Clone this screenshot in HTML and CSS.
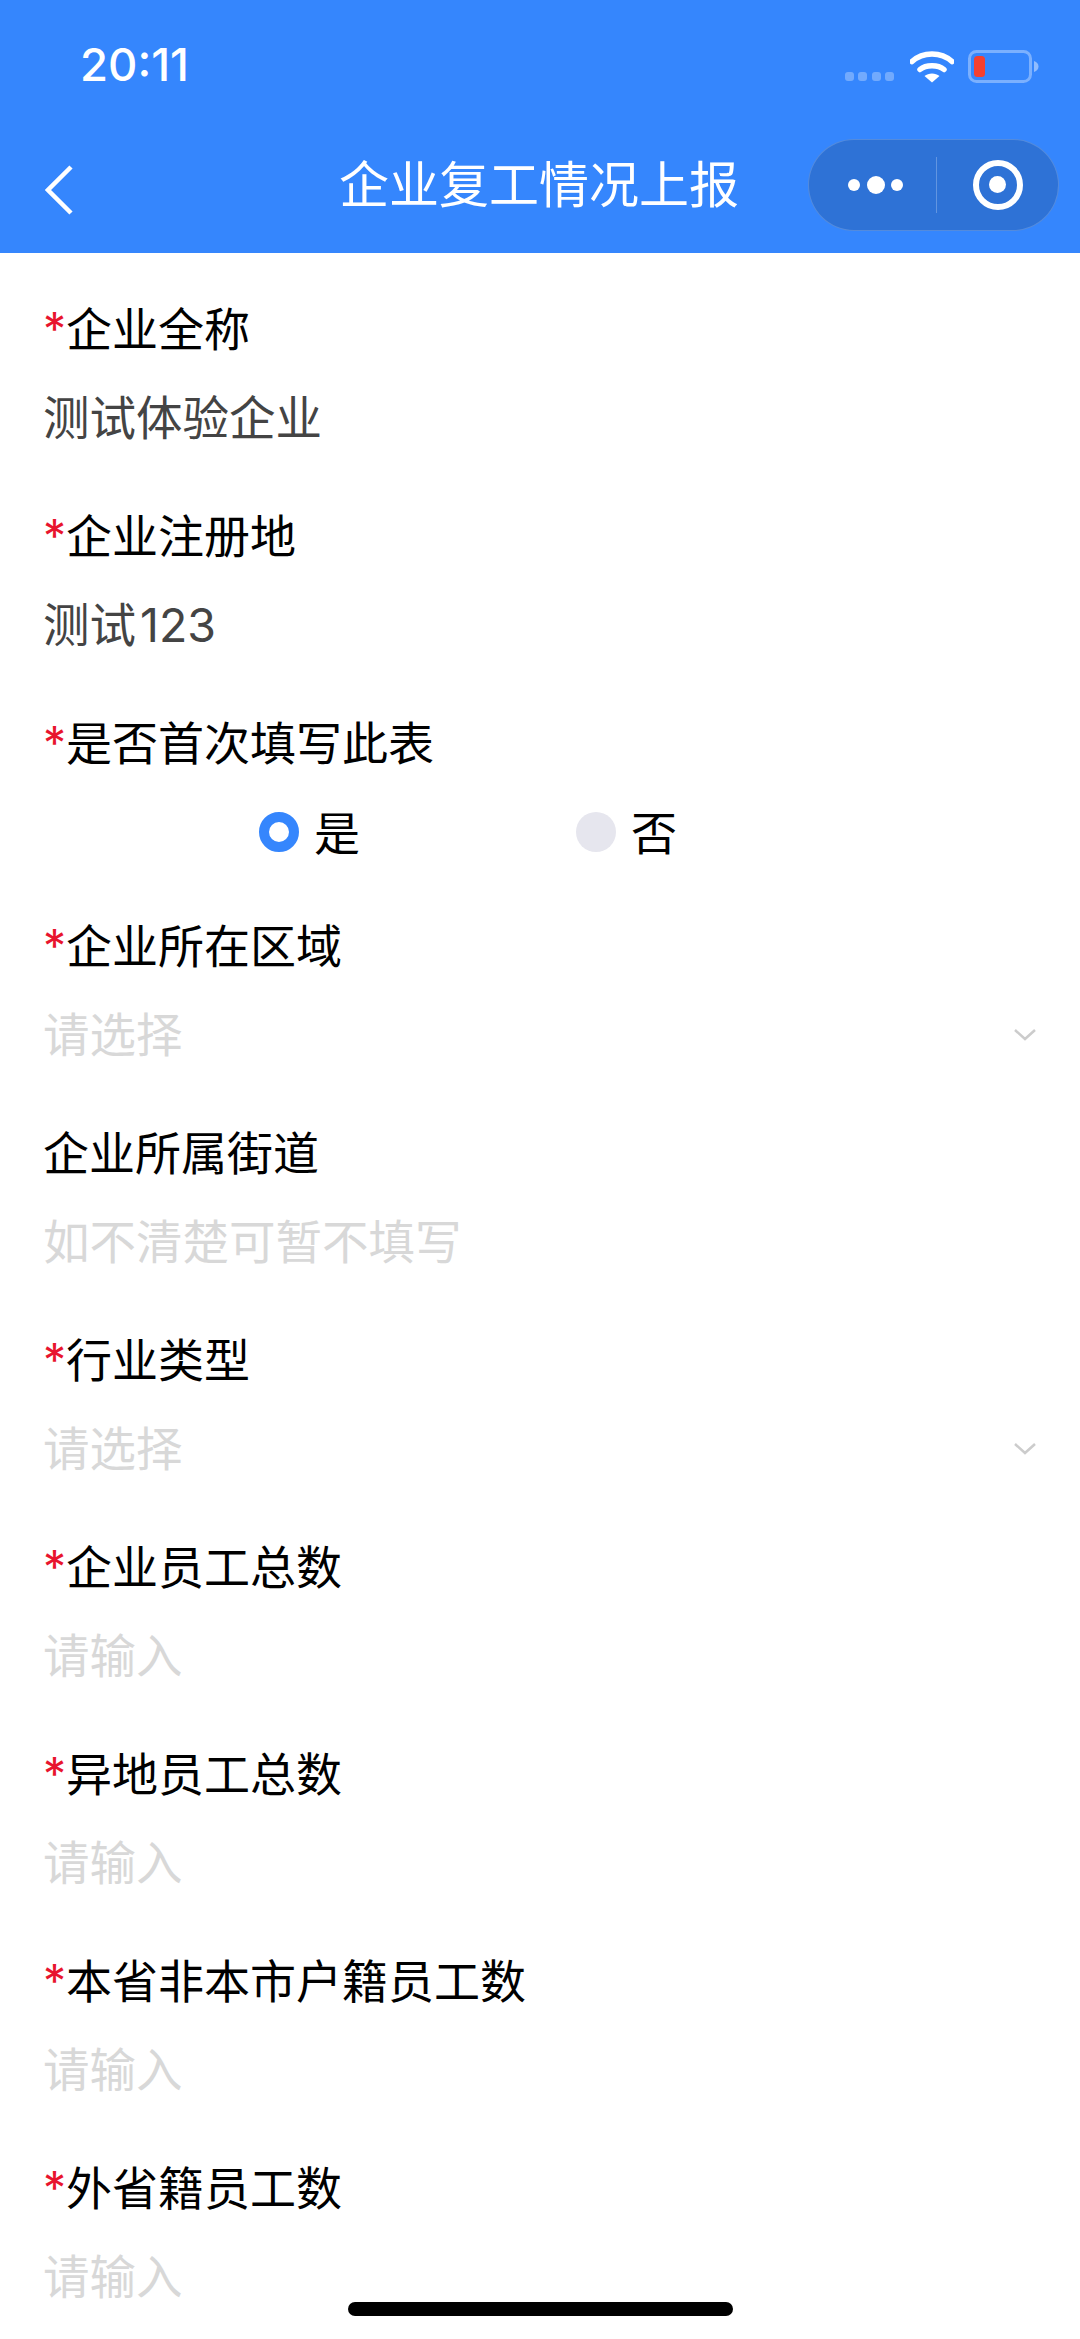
FILE: index.html
```html
<!DOCTYPE html>
<html lang="zh-CN">
<head>
    <meta charset="UTF-8">
    <meta name="viewport" content="width=device-width, initial-scale=1.0">
    <title>企业复工情况上报</title>
    <link rel="stylesheet" href="styles.css">
</head>
<body>
    <header class="top-bar">
        <!-- Status bar -->
        <div class="status-bar">
            <span class="time">20:11</span>
            <div class="status-icons">
                <div class="signal"><i></i><i></i><i></i><i></i></div>
                <svg class="wifi" width="44" height="33" viewBox="0 0 44 33">
                    <path d="M2 11.5C13 1.5 31 1.5 42 11.5" fill="none" stroke="#fff" stroke-width="5.5" stroke-linecap="round"/>
                    <path d="M10 19.5C16 14.5 28 14.5 34 19.5" fill="none" stroke="#fff" stroke-width="5.5" stroke-linecap="round"/>
                    <path d="M22 32.5L14.5 26C18.5 22.5 25.5 22.5 29.5 26Z" fill="#fff"/>
                </svg>
                <svg class="battery" width="71" height="33" viewBox="0 0 71 33">
                    <rect x="1.5" y="1.5" width="61" height="30" rx="7" fill="none" stroke="#fff" stroke-opacity="0.35" stroke-width="3"/>
                    <rect x="6" y="6" width="11" height="21" rx="3.5" fill="#f5402f"/>
                    <path d="M66 11C69 12 70.5 14 70.5 16.5C70.5 19 69 21 66 22Z" fill="#fff" fill-opacity="0.45"/>
                </svg>
            </div>
        </div>
        <!-- Nav bar -->
        <nav class="nav-bar">
            <svg class="back" width="30" height="52" viewBox="0 0 30 52">
                <path d="M26 3L3 26L26 49" fill="none" stroke="#fff" stroke-width="4.5"/>
            </svg>
            <h1 class="title">企业复工情况上报</h1>
            <div class="capsule">
                <div class="capsule-btn more"><i></i><i class="big"></i><i></i></div>
                <div class="capsule-btn">
                    <div class="ring"><i></i></div>
                </div>
            </div>
        </nav>
    </header>

    <form class="report-form">
        <div class="field">
            <label class="field-label"><span class="req">*</span>企业全称</label>
            <div class="field-value">测试体验企业</div>
        </div>
        <div class="field">
            <label class="field-label"><span class="req">*</span>企业注册地</label>
            <div class="field-value">测试<span class="num">123</span></div>
        </div>
        <div class="field field-radio">
            <label class="field-label"><span class="req">*</span>是否首次填写此表</label>
            <div class="radio-group">
                <div class="radio-item"><span class="radio checked"></span><span class="radio-text">是</span></div>
                <div class="radio-item"><span class="radio"></span><span class="radio-text">否</span></div>
            </div>
        </div>
        <div class="field">
            <label class="field-label"><span class="req">*</span>企业所在区域</label>
            <div class="field-value placeholder select">请选择
                <svg width="24" height="14" viewBox="0 0 24 14"><path d="M2 2L12 11L22 2" fill="none" stroke="#ccc" stroke-width="2.5"/></svg>
            </div>
        </div>
        <div class="field">
            <label class="field-label">企业所属街道</label>
            <div class="field-value placeholder">如不清楚可暂不填写</div>
        </div>
        <div class="field">
            <label class="field-label"><span class="req">*</span>行业类型</label>
            <div class="field-value placeholder select">请选择
                <svg width="24" height="14" viewBox="0 0 24 14"><path d="M2 2L12 11L22 2" fill="none" stroke="#ccc" stroke-width="2.5"/></svg>
            </div>
        </div>
        <div class="field">
            <label class="field-label"><span class="req">*</span>企业员工总数</label>
            <div class="field-value placeholder">请输入</div>
        </div>
        <div class="field">
            <label class="field-label"><span class="req">*</span>异地员工总数</label>
            <div class="field-value placeholder">请输入</div>
        </div>
        <div class="field">
            <label class="field-label"><span class="req">*</span>本省非本市户籍员工数</label>
            <div class="field-value placeholder">请输入</div>
        </div>
        <div class="field">
            <label class="field-label"><span class="req">*</span>外省籍员工数</label>
            <div class="field-value placeholder">请输入</div>
        </div>
    </form>

    <div class="home-bar"></div>
</body>
</html>
```

FILE: styles.css
```css
* {
    box-sizing: border-box;
}

body {
    margin: 0;
    height: 2339px;
    overflow: hidden;
    position: relative;
    background-color: #fff;
    font-family: Inter, "Noto Sans CJK SC", sans-serif;
}

.top-bar {
    height: 253px;
    background-color: #3586fd;
    color: #fff;
}

.status-bar {
    height: 132px;
    display: flex;
    justify-content: space-between;
    align-items: flex-start;
    padding: 40px 41px 0 80px;
}

.time {
    font-size: 45.5px;
    font-weight: 500;
    line-height: 50px;
}

.status-icons {
    display: flex;
    align-items: flex-start;
    padding-top: 10px;
}

.signal {
    display: flex;
    gap: 4.5px;
    margin: 22px 16px 0 0;
}

.signal i {
    width: 9px;
    height: 9px;
    border-radius: 3px;
    background-color: rgba(255, 255, 255, 0.3);
}

.battery {
    margin-left: 14px;
}

.nav-bar {
    height: 121px;
    display: grid;
    grid-template-columns: 1fr auto 1fr;
    align-items: center;
    padding: 0 21px 16px;
}

.back {
    margin: 10px 0 0 24px;
}

.title {
    margin: 0 2px 0 0;
    font-size: 50px;
    font-weight: 400;
    line-height: 72px;
}

.capsule {
    justify-self: end;
    width: 251px;
    height: 92px;
    display: flex;
    align-items: center;
    background-color: #2e72d6;
    border: 1.5px solid rgba(255, 255, 255, 0.18);
    border-radius: 46px;
}

.capsule-btn {
    flex: 1;
    display: flex;
    justify-content: center;
    align-items: center;
    height: 56px;
}

.capsule-btn.more {
    border-right: 1px solid rgba(255, 255, 255, 0.25);
    padding-left: 6px;
    gap: 6.5px;
}

.more i {
    width: 12px;
    height: 12px;
    border-radius: 50%;
    background-color: #fff;
}

.more i.big {
    width: 18px;
    height: 18px;
}

.ring {
    width: 50px;
    height: 50px;
    border: 6px solid #fff;
    border-radius: 50%;
    display: flex;
    justify-content: center;
    align-items: center;
}

.ring i {
    width: 17px;
    height: 17px;
    border-radius: 50%;
    background-color: #fff;
}

.report-form {
    padding: 32px 43px 0;
}

.field {
    margin-bottom: 30px;
}

.field-radio {
    margin-bottom: 26px;
}

.field-label {
    display: block;
    font-size: 46px;
    line-height: 89px;
    color: #000;
}

.req {
    color: #e8142e;
}

.field-value {
    font-size: 46.5px;
    line-height: 88px;
    color: #444;
}

.num {
    margin-left: 4px;
}

.placeholder {
    color: #d8d8d8;
}

.select {
    display: flex;
    justify-content: space-between;
    align-items: center;
}

.radio-group {
    display: grid;
    grid-template-columns: 317px auto;
    padding-left: 216px;
    height: 88px;
    align-items: center;
}

.radio-item {
    display: flex;
    align-items: center;
    gap: 15px;
    font-size: 46px;
    color: #000;
}

.radio-text {
    margin-bottom: 5px;
}

.radio {
    width: 40px;
    height: 40px;
    border-radius: 50%;
    background-color: #e6e6ee;
}

.radio.checked {
    background-color: #fff;
    border: 10px solid #3586fd;
}

.home-bar {
    position: absolute;
    left: 348px;
    bottom: 23px;
    width: 385px;
    height: 14px;
    border-radius: 7px;
    background-color: #000;
}
```
